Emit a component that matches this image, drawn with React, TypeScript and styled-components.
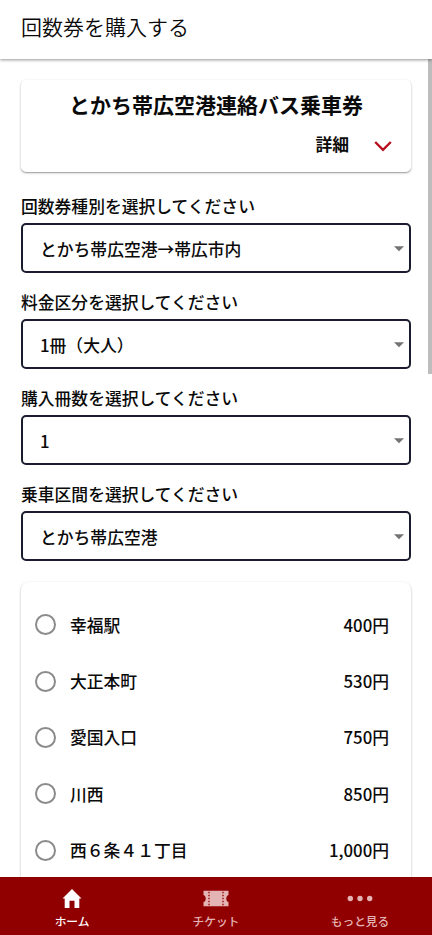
import React from "react";
import styled, { createGlobalStyle } from "styled-components";

const Global = createGlobalStyle`
  * { box-sizing: border-box; }
  body { margin: 0; background: #fff; overflow: hidden; }
`;

const Screen = styled.div`
  display: flex;
  flex-direction: column;
  width: 432px;
  height: 935px;
  overflow: hidden;
  background: #fff;
  color: #0a0a0a;
  font-family: "Noto Sans CJK JP", "Noto Sans", sans-serif;
  font-size: 16.8px;
  font-weight: 500;
  line-height: 24px;
`;

const Header = styled.header`
  flex: 0 0 59px;
  padding: 11px 21px 0;
  background: #fff;
  box-shadow: 0 1px 3px rgba(0, 0, 0, 0.42);
  z-index: 1;
`;

const PageTitle = styled.h1`
  margin: 0;
  font-size: 21px;
  font-weight: 350;
  line-height: 31px;
`;

const Viewport = styled.div`
  flex: 1;
  min-height: 0;
  display: flex;
  justify-content: space-between;
  overflow: hidden;
`;

const Content = styled.main`
  width: 411px;
  padding: 21px 0 0 21px;
`;

const ScrollThumb = styled.div`
  width: 4px;
  height: 315px;
  background: #bdbdbd;
`;

const Card = styled.section`
  background: #fff;
  border-radius: 5px;
  box-shadow: 0 1px 3px rgba(0, 0, 0, 0.2), 0 1px 1px rgba(0, 0, 0, 0.25);
`;

const TicketCard = styled(Card)`
  height: 92px;
  padding: 9px 19px 0;
`;

const TicketName = styled.h2`
  margin: 0;
  text-align: center;
  font-size: 21px;
  font-weight: 700;
  line-height: 31px;
`;

const Details = styled.div`
  display: flex;
  justify-content: flex-end;
  align-items: center;
  gap: 25px;
  height: 24px;
  margin-top: 12px;
  font-weight: 700;
  svg { margin-top: 3px; }
`;

const FieldList = styled.div`
  padding-top: 22px;
`;

const Field = styled.div`
  height: 96px;
`;

const Label = styled.div`
  height: 29px;
  line-height: 25px;
`;

const SelectBox = styled.div`
  display: flex;
  align-items: center;
  justify-content: space-between;
  height: 50px;
  padding: 2px 5px 0 17px;
  border: 2px solid #1b1b30;
  border-radius: 5px;
  svg { margin-top: -1px; }
`;

const FareCard = styled(Card)`
  height: 400px;
  padding: 14.7px 22px 0 14px;
  margin-top: 4px;
  border-radius: 8px;
`;

const FareRow = styled.div`
  display: flex;
  align-items: center;
  height: 56.3px;
`;

const Radio = styled.span`
  width: 21px;
  height: 21px;
  margin-right: 14px;
  border: 2px solid #8b8b8b;
  border-radius: 50%;
`;

const Price = styled.span`
  margin-left: auto;
`;

const Nav = styled.nav`
  flex: 0 0 58px;
  display: grid;
  grid-template-columns: repeat(3, 1fr);
  background: #910000;
  z-index: 1;
`;

const NavItem = styled.div<{ $active?: boolean }>`
  display: flex;
  flex-direction: column;
  align-items: center;
  padding-top: 11px;
  color: ${(p) => (p.$active ? "#fff" : "#e4b4b4")};
  font-size: 11.7px;
  font-weight: 500;
  line-height: 17px;
  svg { height: 24px; }
`;

const Chevron = () => (
  <svg width="18" height="12" viewBox="0 0 18 12" fill="none" stroke="#b90f1c" strokeWidth="2.4">
    <path d="M1.2 2 9 9.8 16.8 2" />
  </svg>
);

const Caret = () => (
  <svg width="10" height="6" viewBox="0 0 10 6">
    <path d="M0 .3h10L5 5.3z" fill="#737373" />
  </svg>
);

const HomeIcon = () => (
  <svg width="20" height="24" viewBox="0 0 20 24" fill="currentColor">
    <path d="M10 1 .5 10.5h2.2V20h4.8v-7.2h5V20h4.8v-9.5h2.2z" />
  </svg>
);

const TicketIcon = () => (
  <svg width="26" height="24" viewBox="0 0 26 24">
    <path d="M.5 2.7h25v4.2c-3 1-3 6.2 0 7.2v4.2H.5v-4.2c3-1 3-6.2 0-7.2z" fill="currentColor" />
    <path d="M6 3.7v14M20 3.7v14" stroke="#910000" strokeWidth="1.3" strokeDasharray="1.6 1.4" />
  </svg>
);

const MoreIcon = () => (
  <svg width="26" height="24" viewBox="0 0 26 24" fill="currentColor">
    <circle cx="3.3" cy="10.5" r="2.7" />
    <circle cx="13" cy="10.5" r="2.7" />
    <circle cx="22.7" cy="10.5" r="2.7" />
  </svg>
);

const fields = [
  { label: "回数券種別を選択してください", value: "とかち帯広空港→帯広市内" },
  { label: "料金区分を選択してください", value: "1冊（大人）" },
  { label: "購入冊数を選択してください", value: "1" },
  { label: "乗車区間を選択してください", value: "とかち帯広空港" },
];

const fares = [
  { stop: "幸福駅", price: "400円" },
  { stop: "大正本町", price: "530円" },
  { stop: "愛国入口", price: "750円" },
  { stop: "川西", price: "850円" },
  { stop: "西６条４１丁目", price: "1,000円" },
];

export default function App() {
  return (
    <>
      <Global />
      <Screen lang="ja">
        <Header>
          <PageTitle>回数券を購入する</PageTitle>
        </Header>
        <Viewport>
          <Content>
            <TicketCard>
              <TicketName>とかち帯広空港連絡バス乗車券</TicketName>
              <Details>
                詳細
                <Chevron />
              </Details>
            </TicketCard>
            <FieldList>
              {fields.map((f) => (
                <Field key={f.label}>
                  <Label>{f.label}</Label>
                  <SelectBox>
                    {f.value}
                    <Caret />
                  </SelectBox>
                </Field>
              ))}
            </FieldList>
            <FareCard>
              {fares.map((f) => (
                <FareRow key={f.stop}>
                  <Radio />
                  {f.stop}
                  <Price>{f.price}</Price>
                </FareRow>
              ))}
            </FareCard>
          </Content>
          <ScrollThumb />
        </Viewport>
        <Nav>
          <NavItem $active>
            <HomeIcon />
            ホーム
          </NavItem>
          <NavItem>
            <TicketIcon />
            チケット
          </NavItem>
          <NavItem>
            <MoreIcon />
            もっと見る
          </NavItem>
        </Nav>
      </Screen>
    </>
  );
}
